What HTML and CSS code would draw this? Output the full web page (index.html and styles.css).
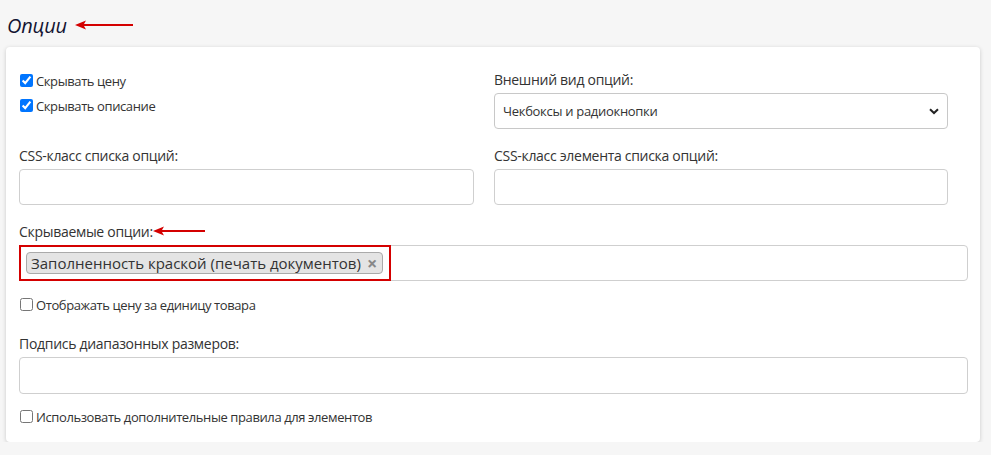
FILE: index.html
```html
<!DOCTYPE html>
<html lang="ru">
<head>
<meta charset="utf-8">
<link rel="stylesheet" href="styles.css">
</head>
<body>
<div class="title-row">
  <h2 class="title">Опции</h2>
  <svg class="arrow arrow-title" width="58" height="10" viewBox="0 0 58 10"><path d="M0 5 L11 0.5 L9 4 L58 4 L58 6 L9 6 L11 9.5 Z" fill="#d40000"/></svg>
</div>
<div class="card">
  <div class="grid top">
    <div class="col left">
      <label class="check"><input type="checkbox" checked><span>Скрывать цену</span></label>
      <label class="check"><input type="checkbox" checked><span>Скрывать описание</span></label>
    </div>
    <div class="col">
      <div class="label">Внешний вид опций:</div>
      <div class="select">
        <span>Чекбоксы и радиокнопки</span>
        <svg class="chev" width="10" height="7" viewBox="0 0 10 7"><path d="M1 1.2 L5 5 L9 1.2" fill="none" stroke="#222" stroke-width="2"/></svg>
      </div>
    </div>
  </div>
  <div class="grid row2">
    <div class="col">
      <div class="label">CSS-класс списка опций:</div>
      <div class="input"></div>
    </div>
    <div class="col">
      <div class="label">CSS-класс элемента списка опций:</div>
      <div class="input"></div>
    </div>
  </div>
  <div class="block row3">
    <div class="label with-arrow">Скрываемые опции:<svg class="arrow" width="52" height="10" viewBox="0 0 52 10"><path d="M0 5 L11 0.5 L9 4 L52 4 L52 6 L9 6 L11 9.5 Z" fill="#d40000"/></svg></div>
    <div class="input multi">
      <span class="tag">Заполненность краской (печать документов)<span class="x">×</span></span>
      <div class="highlight"></div>
    </div>
  </div>
  <label class="check row4"><input type="checkbox"><span>Отображать цену за единицу товара</span></label>
  <div class="block row5">
    <div class="label">Подпись диапазонных размеров:</div>
    <div class="input tall"></div>
  </div>
  <label class="check row6"><input type="checkbox"><span>Использовать дополнительные правила для элементов</span></label>
</div>
</body>
</html>
```
FILE: styles.css
```css
html, body {
  margin: 0;
  padding: 0;
  background: #f6f6f6;
  font-family: "Open Sans", "Noto Sans", sans-serif;
  color: #333;
  font-size: 13px;
  letter-spacing: -0.3px;
}
.title-row {
  display: flex;
  align-items: center;
  height: 47px;
  padding-left: 7px;
  box-sizing: border-box;
}
.title {
  margin: 0;
  font-size: 20px;
  font-style: italic;
  font-weight: 400;
  color: #141432;
  line-height: 28px;
  letter-spacing: -0.2px;
  position: relative;
  top: 2px;
}
.arrow-title {
  margin-left: 8px;
  position: relative;
  top: 1px;
}
.card {
  margin-left: 6px;
  width: 974px;
  background: #fff;
  border-radius: 4px;
  box-shadow: 0 1px 4px rgba(0,0,0,0.18);
  padding: 23px 12px 13px 13px;
  box-sizing: border-box;
  display: flex;
  flex-direction: column;
}
.grid {
  display: grid;
  grid-template-columns: 455px 454px;
  column-gap: 20px;
}
.col {
  display: flex;
  flex-direction: column;
}
.left { margin-top: -2px; }
.check {
  display: flex;
  align-items: center;
  height: 25px;
  line-height: 20px;
  letter-spacing: -0.4px;
}
.check input {
  width: 13px;
  height: 13px;
  margin: 0 3px 0 1px;
  accent-color: #0075ff;
}
.label {
  line-height: 20px;
  height: 20px;
  font-size: 14px;
}
.select {
  margin-top: 3px;
  height: 36px;
  border: 1px solid #c8c8c8;
  border-radius: 4px;
  box-sizing: border-box;
  display: flex;
  align-items: center;
  justify-content: space-between;
  padding: 0 6px 0 8px;
}
.chev {
  margin-right: 2px;
}
.input {
  margin-top: 3px;
  height: 36px;
  border: 1px solid #cfcfcf;
  border-radius: 4px;
  box-sizing: border-box;
  background: #fff;
}
.row2 { margin-top: 17px; }
.row3 { margin-top: 17px; }
.block { display: flex; flex-direction: column; }
.with-arrow { display: flex; align-items: center; }
.with-arrow .arrow { margin-left: 0; position: relative; top: -1px; }
.multi {
  position: relative;
  display: flex;
  align-items: center;
  padding-left: 6px;
}
.tag {
  display: inline-flex;
  align-items: center;
  height: 22px;
  box-sizing: border-box;
  background: #e4e4e4;
  border: 1px solid #aaa;
  border-radius: 4px;
  padding: 0 5px 0 4px;
  font-size: 15px;
  letter-spacing: 0;
  color: #333;
}
.x {
  margin-left: 6px;
  color: #888;
  font-weight: 700;
  font-size: 18px;
  line-height: 18px;
}
.highlight {
  position: absolute;
  left: -1px;
  top: -1px;
  width: 372px;
  height: 36px;
  border: 2px solid #d40000;
  box-sizing: border-box;
}
.row4 { margin-top: 11px; }
.row5 { margin-top: 17px; }
.tall { height: 37px; }
.row6 { margin-top: 10px; }
```
